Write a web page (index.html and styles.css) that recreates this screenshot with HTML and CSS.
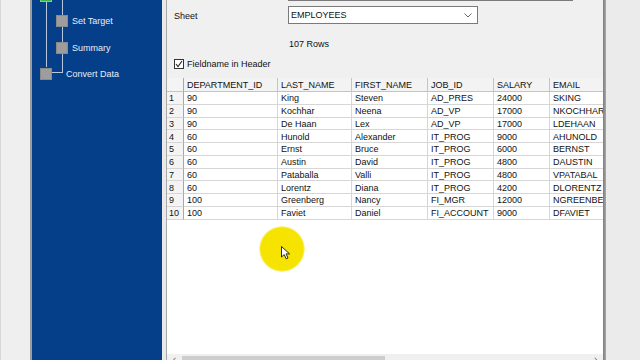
FILE: index.html
```html
<!DOCTYPE html>
<html lang="en">
<head>
  <meta charset="UTF-8" />
  <meta name="viewport" content="width=device-width, initial-scale=1.0"/>
  <title>Convert Data - Sheet</title>
  <link rel="stylesheet" href="styles.css">
</head>
<body>
  <div class="app">
    <div class="gutter"></div>

    <div class="sidebar">
      <span class="line line-root"></span>
      <span class="line line-child"></span>
      <span class="line line-join"></span>
      <span class="node node-done node-top"></span>
      <ul class="tree">
        <li class="step child"><span class="node"></span>Set Target</li>
        <li class="step child"><span class="node"></span>Summary</li>
        <li class="step root"><span class="node"></span>Convert Data</li>
      </ul>
    </div>

    <div class="divider"></div>

    <div class="content">
      <div class="topfield"></div>

      <div class="form-row">
        <label class="label">Sheet</label>
        <div class="select">
          <span>EMPLOYEES</span>
          <svg class="chevron" width="8" height="5" viewBox="0 0 8 5">
            <polyline points="0.5,0.5 4,4 7.5,0.5" fill="none" stroke="#666" stroke-width="1"/>
          </svg>
        </div>
      </div>

      <div class="rows-count">107 Rows</div>

      <div class="check-row">
        <span class="checkbox">
          <svg width="8" height="8" viewBox="0 0 8 8">
            <polyline points="1,4 3,6.5 7,1" fill="none" stroke="#222" stroke-width="1.1"/>
          </svg>
        </span>
        Fieldname in Header
      </div>

      <div class="grid">
        <div class="grid-body">
          <table class="data">
            <colgroup>
              <col class="c-num"><col class="c-dept"><col class="c-last"><col class="c-first">
              <col class="c-job"><col class="c-sal"><col class="c-mail">
            </colgroup>
            <thead>
              <tr>
                <th class="num"></th><th>DEPARTMENT_ID</th><th>LAST_NAME</th><th>FIRST_NAME</th>
                <th>JOB_ID</th><th>SALARY</th><th>EMAIL</th>
              </tr>
            </thead>
            <tbody>
              <tr><td class="num">1</td><td>90</td><td>King</td><td>Steven</td><td>AD_PRES</td><td>24000</td><td>SKING</td></tr>
              <tr><td class="num">2</td><td>90</td><td>Kochhar</td><td>Neena</td><td>AD_VP</td><td>17000</td><td>NKOCHHAR</td></tr>
              <tr><td class="num">3</td><td>90</td><td>De Haan</td><td>Lex</td><td>AD_VP</td><td>17000</td><td>LDEHAAN</td></tr>
              <tr><td class="num">4</td><td>60</td><td>Hunold</td><td>Alexander</td><td>IT_PROG</td><td>9000</td><td>AHUNOLD</td></tr>
              <tr><td class="num">5</td><td>60</td><td>Ernst</td><td>Bruce</td><td>IT_PROG</td><td>6000</td><td>BERNST</td></tr>
              <tr><td class="num">6</td><td>60</td><td>Austin</td><td>David</td><td>IT_PROG</td><td>4800</td><td>DAUSTIN</td></tr>
              <tr><td class="num">7</td><td>60</td><td>Pataballa</td><td>Valli</td><td>IT_PROG</td><td>4800</td><td>VPATABAL</td></tr>
              <tr><td class="num">8</td><td>60</td><td>Lorentz</td><td>Diana</td><td>IT_PROG</td><td>4200</td><td>DLORENTZ</td></tr>
              <tr><td class="num">9</td><td>100</td><td>Greenberg</td><td>Nancy</td><td>FI_MGR</td><td>12000</td><td>NGREENBE</td></tr>
              <tr><td class="num">10</td><td>100</td><td>Faviet</td><td>Daniel</td><td>FI_ACCOUNT</td><td>9000</td><td>DFAVIET</td></tr>
            </tbody>
          </table>
        </div>
        <div class="hscroll">
          <span class="arrow">&#8249;</span>
          <span class="thumb"></span>
          <span class="track"></span>
          <span class="arrow">&#8250;</span>
        </div>
      </div>
    </div>

    <div class="edge"></div>
    <div class="outside"></div>
  </div>

  <!-- click highlight from the screen recorder -->
  <div class="highlight">
    <svg class="cursor" width="10" height="14" viewBox="0 0 10 14">
      <path d="M0.5 0.5 L0.5 11 L3.2 8.6 L5.2 12.8 L7 12 L5.1 7.9 L8.6 7.9 Z" fill="#fff" stroke="#111" stroke-width="0.9"/>
    </svg>
  </div>
</body>
</html>
```

FILE: styles.css
```css
body { margin: 0; width: 640px; height: 360px; overflow: hidden; font-family: "Liberation Sans", Arial, sans-serif; font-size: 9px; color: #111; background: #ececec; }

.app { display: flex; height: 360px; }

.gutter { width: 32px; background: #efefef; border-left: 1px solid #d8d8d8; border-right: 2px solid #9c9c9c; box-sizing: border-box; }

/* wizard steps */
.sidebar { position: relative; width: 130px; background: #053f89; color: #e8eef8; }
.tree { list-style: none; margin: 0; padding: 14px 0 0; }
.step { display: flex; align-items: center; height: 12px; margin-bottom: 14px; white-space: nowrap; padding-top: 1px; }
.step.child { padding-left: 24px; }
.step.child .node { margin-right: 4px; }
.step.root { padding-left: 8px; margin-top: -1px; }
.step.root .node { margin-right: 14px; }
.node { width: 12px; height: 12px; background: #9d9d9d; box-sizing: border-box; border: 1px solid #8a8a8a; position: relative; z-index: 1; }
.node-done { position: absolute; left: 8px; top: -10px; background: #3bb54a; border-color: #7fd08a; }
.line { position: absolute; background: #b9c7de; }
.line-root { left: 14px; top: 0; width: 1px; height: 67px; }
.line-child { left: 30px; top: 0; width: 1px; height: 73px; }
.line-join { left: 20px; top: 72px; width: 11px; height: 1px; }

.divider { width: 5px; background: #e9e9e9; border-right: 1px solid #a8a8a8; box-sizing: border-box; }

/* form */
.content { width: 436px; background: #f0f0f0; display: flex; flex-direction: column; }
.topfield { margin-left: 121px; width: 285px; height: 0; border-bottom: 1px solid #7a7a7a; }
.form-row { display: flex; align-items: center; margin-top: 5px; height: 18px; }
.label { width: 121px; padding: 2px 0 0 7px; box-sizing: border-box; }
.select { width: 190px; height: 18px; box-sizing: border-box; border: 1px solid #7a7a7a; background: #fff; display: flex; align-items: center; justify-content: space-between; padding: 0 5px 0 2px; }
.rows-count { margin-top: 14px; padding-left: 122px; line-height: 12px; }
.check-row { display: flex; align-items: center; margin-top: 9px; height: 10px; padding-left: 7px; }
.checkbox { width: 10px; height: 10px; box-sizing: border-box; border: 1px solid #333; background: #fff; margin-right: 3px; display: flex; align-items: center; justify-content: center; }

/* data grid */
.grid { margin-top: 9px; height: 293px; flex: none; display: flex; flex-direction: column; background: #fff; }
.grid-body { flex: 1; overflow: hidden; }
.data { border-collapse: separate; border-spacing: 0; table-layout: fixed; width: 450px; }
.c-num { width: 17px; }
.c-dept { width: 94px; }
.c-last { width: 74px; }
.c-first { width: 76px; }
.c-job { width: 66px; }
.c-sal { width: 56px; }
.c-mail { width: 67px; }
.data th, .data td { padding: 1px 0 0 3px; text-align: left; font-weight: normal; white-space: nowrap; overflow: hidden; border-right: 1px solid #d6d6d6; border-bottom: 1px solid #d6d6d6; line-height: 10px; }
.data th { height: 12px; line-height: 12px; background: #f3f3f3; border-right-color: #c4c4c4; border-bottom-color: #c4c4c4; }
.data td { height: 10.75px; }
.data .num { background: #f4f4f4; border-right-color: #a8a8a8; padding-left: 2px; }

.hscroll { height: 17px; display: flex; background: #f0f0f0; }
.hscroll .arrow { width: 15px; text-align: center; color: #606060; font-size: 11px; line-height: 10px; }
.hscroll .thumb { width: 203px; margin-top: 2px; background: #cdcdcd; }
.hscroll .track { flex: 1; }

.edge { width: 3px; background: linear-gradient(to right, #7c7c7c, #a9a9a9); }
.outside { flex: 1; background: #ebebeb; }

.highlight { position: absolute; left: 259px; top: 226px; width: 46px; height: 46px; border-radius: 50%; background: radial-gradient(circle, #f6e400 0, #f6e400 21px, rgba(246, 228, 0, 0.5) 22.5px, rgba(246, 228, 0, 0) 23px); }
.cursor { position: absolute; left: 22px; top: 20px; }
```
